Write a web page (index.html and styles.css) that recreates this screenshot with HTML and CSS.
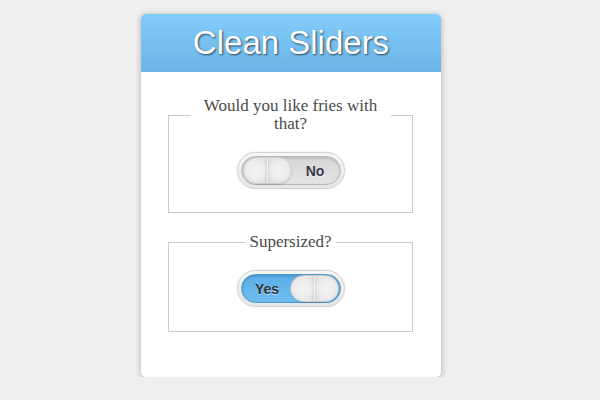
FILE: index.html
```html
<!DOCTYPE html>
<html>
<head>
<meta charset="utf-8">
<title>Clean Sliders</title>
<link rel="stylesheet" href="styles.css">
</head>
<body>
<div class="card">
  <h1 class="card-title">Clean Sliders</h1>
  <div class="card-body">
    <fieldset class="group">
      <legend class="group-legend">Would you like fries with that?</legend>
      <div class="toggle">
        <div class="track">
          <span class="knob"></span>
          <span class="label">No</span>
        </div>
      </div>
    </fieldset>
    <fieldset class="group">
      <legend class="group-legend">Supersized?</legend>
      <div class="toggle">
        <div class="track on">
          <span class="label">Yes</span>
          <span class="knob"></span>
        </div>
      </div>
    </fieldset>
  </div>
</div>
</body>
</html>
```
FILE: styles.css
```css
html, body {
  margin: 0;
  padding: 0;
  background: #efefef;
}
body {
  padding-top: 14px;
}
.card {
  width: 300px;
  margin-left: 141px;
  background: #fff;
  border-radius: 5px;
  box-shadow: 0 1px 6px rgba(0,0,0,0.28);
}
.card-title {
  margin: 0;
  height: 58px;
  line-height: 58px;
  text-align: center;
  font-family: "Liberation Sans", Arial, sans-serif;
  font-weight: normal;
  font-size: 33px;
  color: #fff;
  text-shadow: 1px 1px 2px rgba(0,0,0,0.65);
  background: linear-gradient(#82cdfb, #6bb4e7);
  border-radius: 5px 5px 0 0;
}
.card-body {
  padding: 25px 28px 45px 27px;
  display: flex;
  flex-direction: column;
  gap: 20px;
}
.group {
  margin: 0;
  padding: 19px 0 23px;
  border: 1px solid #cacaca;
}
.group + .group {
  padding-bottom: 24px;
}
.group-legend {
  margin: 0 auto;
  max-width: 200px;
  box-sizing: border-box;
  padding: 0 4px;
  text-align: center;
  font-family: "Liberation Serif", Georgia, serif;
  font-size: 17px;
  line-height: 18px;
  color: #4a4a4a;
}
.toggle {
  width: 108px;
  height: 37px;
  box-sizing: border-box;
  margin: 0 auto;
  padding: 3px;
  border: 1px solid #d2d2d2;
  border-radius: 19px;
  background: linear-gradient(#f6f6f6, #e6e6e6);
  box-shadow: 0 0 2px rgba(0,0,0,0.12);
}
.track {
  display: flex;
  align-items: center;
  height: 29px;
  box-sizing: border-box;
  padding: 0 1px;
  border: 1px solid #b9b9b9;
  border-radius: 15px;
  background: linear-gradient(#d6d6d6, #e4e4e4);
  box-shadow: inset 0 1px 3px rgba(0,0,0,0.18);
}
.track.on {
  border-color: #4a98cf;
  background: linear-gradient(#5aaee7, #6fbdf0);
}
.label {
  flex: 1;
  text-align: center;
  font-family: "Liberation Sans", Arial, sans-serif;
  font-weight: bold;
  font-size: 14px;
  color: #3a3a48;
  text-shadow: 0 1px 0 rgba(255,255,255,0.6);
}
.track.on .label {
  color: #2e3338;
  padding-left: 2px;
}
.knob {
  flex: none;
  width: 49px;
  height: 27px;
  box-sizing: border-box;
  border-radius: 14px;
  border: 1px solid #cbcbcb;
  background:
    radial-gradient(ellipse 12px 12px at 12px 50%, #f3f3f3 0, #eeeeee 65%, rgba(238,238,238,0) 100%),
    radial-gradient(ellipse 12px 12px at 35px 50%, #f3f3f3 0, #eeeeee 65%, rgba(238,238,238,0) 100%),
    linear-gradient(90deg, #e6e6e6 0, #e6e6e6 40%, #d8d8d8 48%, #f0f0f0 50%, #d8d8d8 52%, #e6e6e6 60%, #e6e6e6 100%);
  box-shadow: 0 1px 1px rgba(0,0,0,0.12);
}
```
